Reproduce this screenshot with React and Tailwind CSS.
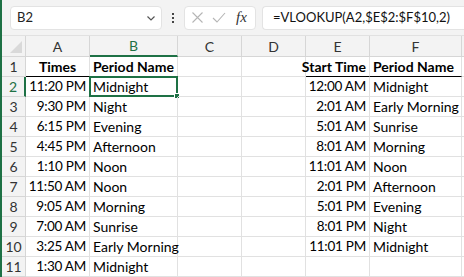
import React from 'react';

const rows = [
  ['Times', 'Period Name', '', '', 'Start Time', 'Period Name'],
  ['11:20 PM', 'Midnight', '', '', '12:00 AM', 'Midnight'],
  ['9:30 PM', 'Night', '', '', '2:01 AM', 'Early Morning'],
  ['6:15 PM', 'Evening', '', '', '5:01 AM', 'Sunrise'],
  ['4:45 PM', 'Afternoon', '', '', '8:01 AM', 'Morning'],
  ['1:10 PM', 'Noon', '', '', '11:01 AM', 'Noon'],
  ['11:50 AM', 'Noon', '', '', '2:01 PM', 'Afternoon'],
  ['9:05 AM', 'Morning', '', '', '5:01 PM', 'Evening'],
  ['7:00 AM', 'Sunrise', '', '', '8:01 PM', 'Night'],
  ['3:25 AM', 'Early Morning', '', '', '11:01 PM', 'Midnight'],
  ['1:30 AM', 'Midnight', '', '', '', ''],
];

const cols = ['A', 'B', 'C', 'D', 'E', 'F'];

function FormulaBar() {
  return (
    <div className="flex items-center h-[36px] bg-[#f3f3f3] border-b border-[#e1e1e1] pl-[8px]">
      <div className="flex items-center justify-between w-[152px] h-[24px] bg-white border border-[#e3e3e3] rounded-[4px] pl-[6px] pr-[4px]">
        <span className="text-[13px] text-[#222]">B2</span>
        <svg width="12" height="12" viewBox="0 0 12 12" fill="none" stroke="#555" strokeWidth="1.2">
          <path d="M2.5 4.5 L6 8 L9.5 4.5" />
        </svg>
      </div>
      <div className="w-[22px] flex flex-col items-center gap-[2px]">
        <span className="w-[2px] h-[2px] bg-[#444]" />
        <span className="w-[2px] h-[2px] bg-[#444]" />
        <span className="w-[2px] h-[2px] bg-[#444]" />
      </div>
      <div className="flex items-center h-[24px] w-[72px] bg-white border border-[#e3e3e3] rounded-[4px] px-[6px] gap-[8px]">
        <svg width="13" height="13" viewBox="0 0 13 13" fill="none" stroke="#b5b5b5" strokeWidth="1.1">
          <path d="M1.5 1.5 L11.5 11.5 M11.5 1.5 L1.5 11.5" />
        </svg>
        <svg width="14" height="13" viewBox="0 0 14 13" fill="none" stroke="#b5b5b5" strokeWidth="1.1">
          <path d="M1 7 L5 11 L13 2" />
        </svg>
        <span className="italic text-[15px] text-[#333] font-['Liberation_Serif',serif] ml-[2px]">fx</span>
      </div>
      <div className="flex items-center flex-1 h-[24px] bg-white border border-[#e3e3e3] rounded-l-[4px] border-r-0 ml-[6px] pl-[10px]">
        <span className="text-[13px] text-[#111] whitespace-nowrap">=VLOOKUP(A2,$E$2:$F$10,2)</span>
      </div>
    </div>
  );
}

function Cell({ r, c, v }) {
  const bold = r === 0 && v;
  const right = c === 0 || c === 4;
  const center = r === 0 && c === 0;
  const thick = r === 0 && (c === 0 || c === 1 || c === 4 || c === 5);
  const time = r > 0 && right;
  return (
    <div
      className={`relative h-[20px] flex items-center px-[3px] whitespace-nowrap text-black border-r border-[#e1e1e1] ${time ? 'text-[13.5px] tracking-[-0.25px]' : 'text-[14px]'} ${thick ? 'border-b border-b-black' : 'border-b border-b-[#e1e1e1]'} ${bold ? 'font-bold' : ''} ${center ? 'justify-center' : right ? 'justify-end' : 'justify-start'}`}
    >
      {v}
      {r === 1 && c === 1 && (
        <div className="absolute -left-[1px] -top-[1px] -right-[1px] -bottom-[1px] border-2 border-[#1e7145]">
          <div className="absolute -right-[4px] -bottom-[4px] w-[6px] h-[6px] bg-[#1e7145] border border-white" />
        </div>
      )}
    </div>
  );
}

export default function App() {
  return (
    <div className="w-[464px] h-[277px] overflow-hidden bg-white border-l-2 border-[#1e7145] font-['Lato','Noto_Sans',sans-serif]">
      <FormulaBar />
      <div className="grid grid-cols-[24px_64px_88px_64px_64px_64px_92px_1fr]">
        <div className="h-[21px] bg-[#f3f3f3] border-r border-b border-[#d6d6d6] relative">
          <svg className="absolute right-[3px] bottom-[3px]" width="12" height="12" viewBox="0 0 12 12">
            <path d="M12 0 L12 12 L0 12 Z" fill="#d9d9d9" />
          </svg>
        </div>
        {cols.map((l) => (
          <div
            key={l}
            className={`h-[21px] flex items-center justify-center text-[14px] bg-[#f3f3f3] border-r border-[#d6d6d6] ${l === 'B' ? 'text-[#1e7145] border-b-2 border-b-[#1e7145]' : 'text-[#333] border-b border-b-[#d6d6d6]'}`}
          >
            {l}
          </div>
        ))}
        <div className="h-[21px] bg-[#f3f3f3] border-b border-[#d6d6d6]" />
        {rows.map((row, r) => (
          <React.Fragment key={r}>
            <div
              className={`h-[20px] flex items-center justify-center text-[14px] bg-[#f3f3f3] border-b border-[#d6d6d6] ${r === 1 ? 'text-[#1e7145] border-r-2 border-r-[#1e7145]' : 'text-[#333] border-r border-r-[#d6d6d6]'}`}
            >
              {r + 1}
            </div>
            {row.map((v, c) => (
              <Cell key={c} r={r} c={c} v={v} />
            ))}
            <div className="h-[20px] border-b border-[#e1e1e1]" />
          </React.Fragment>
        ))}
      </div>
    </div>
  );
}
